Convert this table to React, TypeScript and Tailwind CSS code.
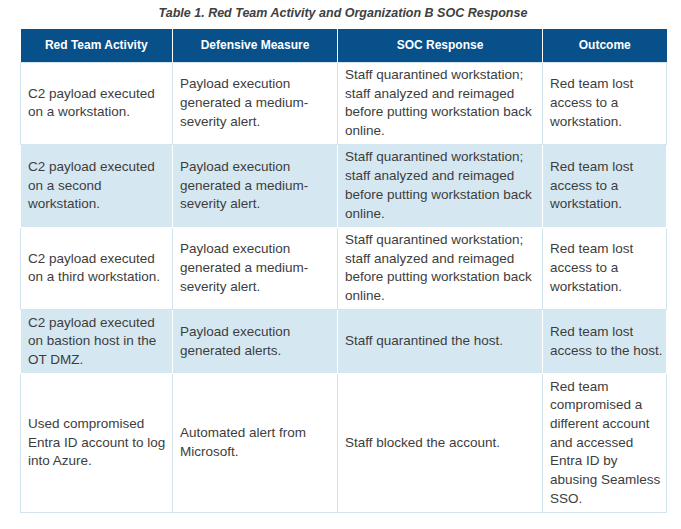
const columns = ["Red Team Activity", "Defensive Measure", "SOC Response", "Outcome"];
const widths = ["w-[152px]", "w-[165px]", "w-[205px]", "w-[124px]"];

// each cell is a list of lines, so the breaks match the printed table
const rows: string[][][] = [
  [
    ["C2 payload executed", "on a workstation."],
    ["Payload execution", "generated a medium-", "severity alert."],
    ["Staff quarantined workstation;", "staff analyzed and reimaged", "before putting workstation back", "online."],
    ["Red team lost", "access to a", "workstation."],
  ],
  [
    ["C2 payload executed", "on a second", "workstation."],
    ["Payload execution", "generated a medium-", "severity alert."],
    ["Staff quarantined workstation;", "staff analyzed and reimaged", "before putting workstation back", "online."],
    ["Red team lost", "access to a", "workstation."],
  ],
  [
    ["C2 payload executed", "on a third workstation."],
    ["Payload execution", "generated a medium-", "severity alert."],
    ["Staff quarantined workstation;", "staff analyzed and reimaged", "before putting workstation back", "online."],
    ["Red team lost", "access to a", "workstation."],
  ],
  [
    ["C2 payload executed", "on bastion host in the", "OT DMZ."],
    ["Payload execution", "generated alerts."],
    ["Staff quarantined the host."],
    ["Red team lost", "access to the host."],
  ],
  [
    ["Used compromised", "Entra ID account to log", "into Azure."],
    ["Automated alert from", "Microsoft."],
    ["Staff blocked the account."],
    ["Red team", "compromised a", "different account", "and accessed", "Entra ID by", "abusing Seamless", "SSO."],
  ],
];

export default function App() {
  return (
    <div className="min-h-[529px] w-[681px] bg-white font-['Liberation_Sans',Arial,sans-serif] text-[#3d3d3d]">
      <div className="pl-[20px] pt-[4px]">
        <p className="w-[646px] text-center text-[12.5px] font-bold italic leading-[19px] text-[#404040]">
          Table 1. Red Team Activity and Organization B SOC Response
        </p>
        <table className="mt-[6px] w-[646px] table-fixed border-collapse">
          <thead>
            <tr className="h-[33px] bg-[#07508a]">
              {columns.map((c, i) => (
                <th
                  key={c}
                  className={`${widths[i]} border-x border-white text-center text-[12px] font-bold text-white first:border-l-0 last:border-r-0`}
                >
                  {c}
                </th>
              ))}
            </tr>
          </thead>
          <tbody>
            {rows.map((row, r) => {
              const striped = r % 2 === 1;
              return (
                <tr key={r} className={striped ? "bg-[#d5e8f2]" : "bg-white"}>
                  {row.map((lines, c) => (
                    <td
                      key={c}
                      className={`border px-[7px] py-[3.4px] align-middle text-[13.5px] leading-[18.7px] whitespace-nowrap ${
                        striped ? "border-white" : "border-[#d3e5ef]"
                      }`}
                    >
                      {lines.map((l, i) => (
                        <div key={i}>{l}</div>
                      ))}
                    </td>
                  ))}
                </tr>
              );
            })}
          </tbody>
        </table>
      </div>
    </div>
  );
}
